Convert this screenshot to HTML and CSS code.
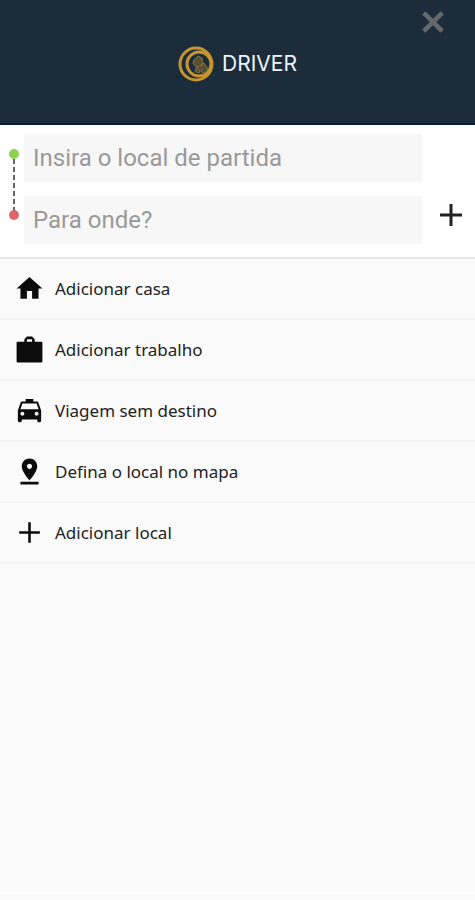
FILE: index.html
```html
<!DOCTYPE html>
<html lang="pt-BR">
<head>
  <meta charset="UTF-8">
  <meta name="viewport" content="width=device-width, initial-scale=1">
  <title>Driver</title>
  <link rel="stylesheet" href="styles.css">
</head>
<body>
  <header class="header">
    <div class="logo">
      <svg class="logo-icon" viewBox="0 0 36 36" fill="none" stroke="#c6952f">
        <circle cx="18" cy="18" r="16" stroke-width="3"></circle>
        <circle cx="21" cy="18" r="12" stroke-width="3"></circle>
        <path d="M16 14l4-4 4 2 1 5-4 4-4-1-2-3zM17 23l3-2 2 3-1 3-3-1zM23 20l3-3 4 6-3 4-4-1z" fill="#59502f" stroke="#85703a" stroke-width="1"></path>
      </svg>
      <span class="logo-text">DRIVER</span>
    </div>
    <button class="close-btn" type="button" aria-label="Fechar">
      <svg class="close-icon" viewBox="0 0 24 24" fill="none" stroke="currentColor" stroke-width="5">
        <line x1="2" y1="2" x2="22" y2="22"></line>
        <line x1="22" y1="2" x2="2" y2="22"></line>
      </svg>
    </button>
  </header>

  <form class="search">
    <svg class="route" viewBox="0 0 10 72">
      <line x1="5" y1="10" x2="5" y2="62" stroke="#666" stroke-width="2" stroke-dasharray="5 3"></line>
      <circle cx="5" cy="5" r="5" fill="#8fd14a"></circle>
      <circle cx="5" cy="66" r="5" fill="#dd646a"></circle>
    </svg>
    <div class="fields">
      <input class="field" type="text" placeholder="Insira o local de partida" aria-label="Local de partida">
      <input class="field" type="text" placeholder="Para onde?" aria-label="Destino">
    </div>
    <button class="add-btn" type="button" aria-label="Adicionar parada">
      <svg class="add-icon" viewBox="0 0 22 22" fill="none" stroke="currentColor" stroke-width="3">
        <path d="M11 0v22M0 11h22"></path>
      </svg>
    </button>
  </form>

  <main class="options">
    <button class="option" type="button">
      <svg class="option-icon" viewBox="0 0 24 24" fill="currentColor">
        <path d="M10 20v-6h4v6h5v-8h3L12 3 2 12h3v8z"></path>
      </svg>
      Adicionar casa
    </button>
    <button class="option" type="button">
      <svg class="option-icon" viewBox="0 0 24 24" fill="currentColor">
        <path d="M21 6h-5V4l-2-2h-4L8 4v2H3c-.6 0-1 .4-1 1v14c0 .6.4 1 1 1h18c.6 0 1-.4 1-1V7c0-.6-.4-1-1-1zm-7 0h-4V4h4z"></path>
      </svg>
      Adicionar trabalho
    </button>
    <button class="option" type="button">
      <svg class="option-icon" viewBox="0 0 24 24" fill="currentColor">
        <path d="M18.920 6.010C18.720 5.420 18.160 5 17.500 5H15V3H9v2H6.500c-.66 0-1.210.42-1.420 1.010L3 12v8c0 .55.45 1 1 1h1c.55 0 1-.45 1-1v-1h12v1c0 .55.45 1 1 1h1c.55 0 1-.45 1-1v-8l-2.080-5.990zM6.500 16c-.83 0-1.500-.67-1.500-1.500S5.670 13 6.500 13s1.500.67 1.500 1.500S7.330 16 6.500 16zm11 0c-.83 0-1.500-.67-1.500-1.500s.67-1.500 1.500-1.500 1.500.67 1.500 1.500-.67 1.500-1.500 1.500zM5 11l1.500-4.500h11L19 11H5z"></path>
      </svg>
      Viagem sem destino
    </button>
    <button class="option" type="button">
      <svg class="option-icon" viewBox="0 0 24 24" fill="currentColor">
        <path d="M18 8c0-3.310-2.690-6-6-6S6 4.690 6 8c0 4.500 6 11 6 11s6-6.500 6-11zm-8 0c0-1.100.9-2 2-2s2 .9 2 2-.89 2-2 2c-1.100 0-2-.9-2-2zM5 20v2h14v-2H5z"></path>
      </svg>
      Defina o local no mapa
    </button>
    <button class="option" type="button">
      <svg class="option-icon" viewBox="0 0 24 24" fill="currentColor">
        <path d="M20 13h-7v7h-2v-7H4v-2h7V4h2v7h7z"></path>
      </svg>
      Adicionar local
    </button>
  </main>
  <footer class="footer"></footer>
</body>
</html>
```

FILE: styles.css
```css
* {
  box-sizing: border-box;
  margin: 0;
  padding: 0;
}

body {
  display: flex;
  flex-direction: column;
  min-height: 100vh;
  background-color: #fafafa;
  color: #222;
  font-family: 'Noto Sans', 'Open Sans', sans-serif;
}

button {
  border: none;
  background: none;
  color: inherit;
  font: inherit;
  cursor: pointer;
}

svg {
  display: block;
  flex: none;
}

.header {
  position: relative;
  display: flex;
  justify-content: center;
  padding: 46px 16px 41px;
  background-color: #1d2c3b;
  border-bottom: 2px solid #041c35;
}

.logo {
  display: flex;
  align-items: center;
  gap: 8px;
}

.logo-icon {
  width: 36px;
  height: 36px;
}

.logo-text {
  color: #eef4fa;
  font-family: Inter, sans-serif;
  font-size: 21px;
  line-height: 24px;
}

.close-btn {
  position: absolute;
  top: 6px;
  right: 26px;
  padding: 5px;
  color: #66696b;
}

.close-icon {
  width: 22px;
  height: 22px;
}

.search {
  display: flex;
  align-items: flex-start;
  padding: 9px 13px 13px 9px;
  background-color: #fff;
  border-bottom: 2px solid #e6e6e6;
}

.route {
  width: 10px;
  height: 72px;
  margin: 15px 5px 0 0;
}

.fields {
  display: flex;
  flex: 1;
  flex-direction: column;
  gap: 14px;
  min-width: 0;
}

.field {
  width: 100%;
  height: 48px;
  padding: 0 9px;
  border: none;
  background-color: #f7f7f7;
  color: #333;
  font-family: Roboto, sans-serif;
  font-size: 24px;
}

.field::placeholder {
  color: #999;
  opacity: 1;
}

.add-btn {
  align-self: flex-end;
  margin-left: 18px;
  padding: 18px 0;
}

.add-icon {
  width: 22px;
  height: 22px;
}

.options {
  flex: 1;
}

.option {
  display: flex;
  align-items: center;
  gap: 10px;
  width: 100%;
  height: 61px;
  padding: 0 14px;
  border-bottom: 2px solid #f4f4f4;
  font-size: 17px;
  text-align: left;
}

.option-icon {
  width: 31px;
  height: 31px;
  color: #0c0c0c;
}

.footer {
  height: 8px;
  border-top: 2px solid #fff;
}
```
